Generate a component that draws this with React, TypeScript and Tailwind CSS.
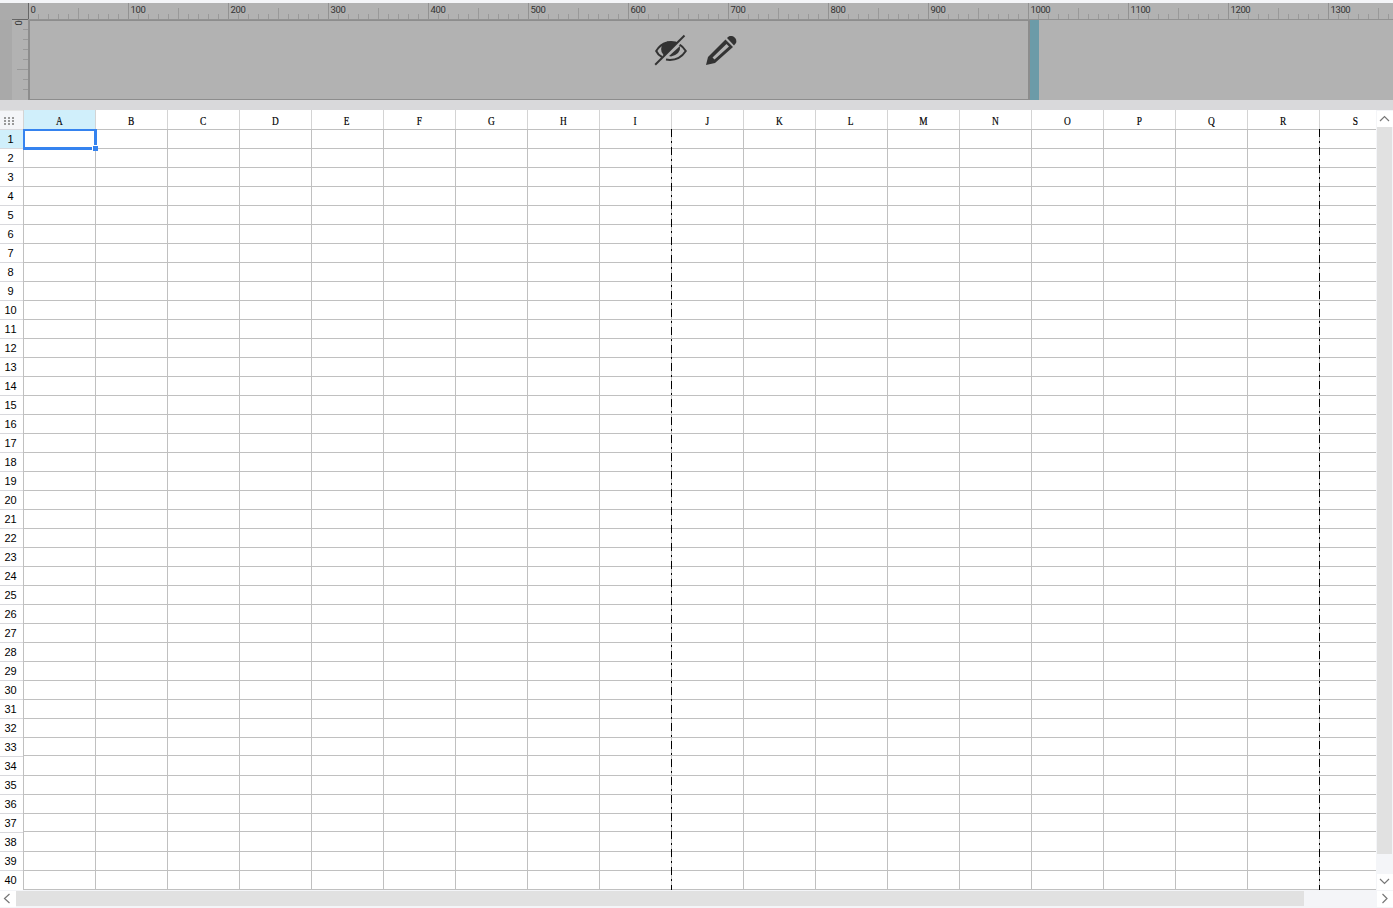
import React from 'react'

const columns = 'ABCDEFGHIJKLMNOPQRS'.split('')
const rows = Array.from({ length: 40 }, (_, i) => i + 1)
const majors = Array.from({ length: 14 }, (_, i) => i * 100)

const lineOffset = (i: number) => i * 19 - (i === 33 || i === 37 ? 1 : 0)

// One 100px segment of the horizontal ruler
function RulerSegment({ value }: { value: number }) {
  return (
    <div className="relative h-4 w-[100px] shrink-0">
      <svg width="100" height="16" className="block" shapeRendering="crispEdges">
        <path d="M.5 0V16" stroke={value === 0 ? '#666' : '#929292'} />
        <path d="M50.5 5V16" stroke="#999" />
        <path d="M10.5 11V16M20.5 11V16M30.5 11V16M40.5 11V16M60.5 11V16M70.5 11V16M80.5 11V16M90.5 11V16" stroke="#999" />
      </svg>
      <span className="absolute left-[2.5px] top-[2px] text-[9.5px] leading-[10px] tracking-[-0.4px] text-[#333]">{value}</span>
    </div>
  )
}

function Ruler() {
  return (
    <div className="flex h-[17px] bg-[#b2b2b2]">
      <div className="flex w-7 shrink-0 items-end bg-[#ababab] pl-3">
        <div className="h-px w-4 bg-[#666]" />
      </div>
      <div className="flex border-b border-[#929292]">
        {majors.map((value) => (
          <RulerSegment key={value} value={value} />
        ))}
      </div>
    </div>
  )
}

function HiddenIcon() {
  return (
    <svg width="34" height="34" viewBox="0 0 34 34" className="shrink-0" fill="none" stroke="#333" strokeWidth="2">
      <path d="M8 23Q4 21 2.2 17Q6 10.5 13 8.5" />
      <path d="M13 8.3Q25 6 31.8 17Q25 27.5 12 25.6" />
      <path d="M8 10.5Q5 20 12.5 22.5L25 9.5Q17 5.5 8 10.5Z" fill="#333" stroke="none" />
      <path d="M26 12Q27 20 17 22.5L15 22Z" fill="#333" stroke="none" />
      <path d="M2.5 31.7L31.5 2.7" stroke="#b2b2b2" strokeWidth="3" />
      <path d="M1.2 30.8L30.5 1.5" />
    </svg>
  )
}

function PencilIcon() {
  return (
    <svg width="34" height="34" viewBox="0 0 34 34" className="shrink-0" fill="#333">
      <path d="M1 31L3 23L20.5 5.5L28 13L10 29ZM7.5 23.5L9.5 25.5L24 12.5L21.5 10Z" fillRule="evenodd" />
      <path d="M22 4C25-.5 33 3 31 9L29 11.5Z" />
    </svg>
  )
}

function Canvas() {
  return (
    <div className="flex h-20 bg-[#b2b2b2]">
      <div className="w-3 shrink-0 bg-[#a9a9a9]" />
      <div className="relative w-4 shrink-0">
        <svg width="16" height="80" className="block" shapeRendering="crispEdges">
          <path d="M11 9.5H16M11 19.5H16M11 29.5H16M11 39.5H16M5 49.5H16M11 59.5H16M11 69.5H16" stroke="#999" />
        </svg>
        <span className="absolute left-[3px] top-0 rotate-90 text-[9.5px] leading-[6px] text-[#333]">0</span>
      </div>
      <div className="flex w-[1002px] shrink-0 items-start gap-[17px] border border-x-2 border-[#8d8d8d] pl-[624px] pt-[13px]">
        <HiddenIcon />
        <PencilIcon />
      </div>
      <div className="w-[9px] shrink-0 bg-[#6c9ba8]" />
    </div>
  )
}

function ColumnHeaders() {
  return (
    <div className="flex h-[19px] overflow-hidden">
      <div className="flex w-[23px] shrink-0 items-center justify-center border-t border-[#e5e5e5] bg-[#f4f5f8] pr-1 pt-[2px]">
        <svg width="11" height="9" fill="#999" shapeRendering="crispEdges">
          {[0, 4, 8].map((x) =>
            [0, 3, 6].map((y) => <rect key={`${x}-${y}`} x={x} y={y} width="2" height="2" />)
          )}
        </svg>
      </div>
      {columns.map((name) => (
        <div
          key={name}
          className={`w-[72px] shrink-0 border-l border-[#d4d4d4] pr-px pt-1 text-center font-['Liberation_Serif'] text-xs leading-[14px] ${name === 'A' ? 'bg-[#d0effb]' : ''}`}
        >
          <span className="inline-block scale-x-[0.78] [-webkit-text-stroke:0.2px_#000]">{name}</span>
        </div>
      ))}
    </div>
  )
}

function RowHeaders() {
  return (
    <div className="w-[23px] shrink-0">
      {rows.map((row) => (
        <div
          key={row}
          className={`h-[19px] border-t border-[#d8d8dc] pr-[2px] text-center font-['Liberation_Sans'] text-[11px] leading-[18px] [font-kerning:none] ${row === 1 ? 'bg-[#d0effb]' : ''}`}
        >
          {row}
        </div>
      ))}
    </div>
  )
}

function Grid() {
  return (
    <svg width="1353" height="761" className="block shrink-0" shapeRendering="crispEdges">
      {columns.map((name, i) => (
        <path key={name} d={`M${i * 72 + 0.5} 0V761`} stroke="#c0c0c0" />
      ))}
      {[...rows, 41].map((row, i) => (
        <path key={row} d={`M0 ${lineOffset(i) + 0.5}H1353`} stroke="#c0c0c0" />
      ))}
      {/* page breaks */}
      <path d="M648.5 0V761M1296.5 0V761" stroke="#000" strokeDasharray="8 4 2 4" />
      {/* active cell */}
      <rect x="0" y="0" width="74" height="21" fill="#3583ef" />
      <rect x="2" y="2" width="69" height="16" fill="#fff" />
      <rect x="69" y="16" width="6" height="6" fill="#fff" />
      <rect x="70" y="17" width="5" height="5" fill="#3583ef" />
    </svg>
  )
}

function Arrow({ d }: { d: string }) {
  return (
    <svg width="16" height="16" className="shrink-0 bg-white" fill="none" stroke="#777" strokeWidth="1.2">
      <path d={d} />
    </svg>
  )
}

export default function App() {
  return (
    <div className="flex h-[908px] w-[1393px] flex-col overflow-hidden bg-white font-['Roboto',sans-serif] text-black">
      <div className="h-[3px] shrink-0 bg-[#f4f5f8]" />
      <div className="shrink-0 overflow-hidden">
        <Ruler />
        <Canvas />
      </div>
      <div className="h-[10px] shrink-0 bg-[#d9d9db]" />
      <div className="flex h-[780px] shrink-0">
        <div className="w-[1376px] shrink-0 overflow-hidden">
          <ColumnHeaders />
          <div className="flex">
            <RowHeaders />
            <Grid />
          </div>
        </div>
        <div className="flex w-[17px] flex-col bg-[#f4f5f8] pl-px pt-px">
          <Arrow d="M3 10L7.5 5.5L12 10" />
          <div className="h-[727px] w-[15px] bg-[#e1e1e1]" />
          <div className="flex-1" />
          <Arrow d="M3 5L7.5 9.5L12 5" />
        </div>
      </div>
      <div className="flex h-[18px] shrink-0 bg-[#f4f5f8] pt-px">
        <Arrow d="M9.5 3L4.5 7.5L9.5 12" />
        <div className="h-[15px] w-[1288px] bg-[#e1e1e1]" />
        <div className="flex-1" />
        <Arrow d="M5.5 3L10 7.5L5.5 12" />
      </div>
    </div>
  )
}
